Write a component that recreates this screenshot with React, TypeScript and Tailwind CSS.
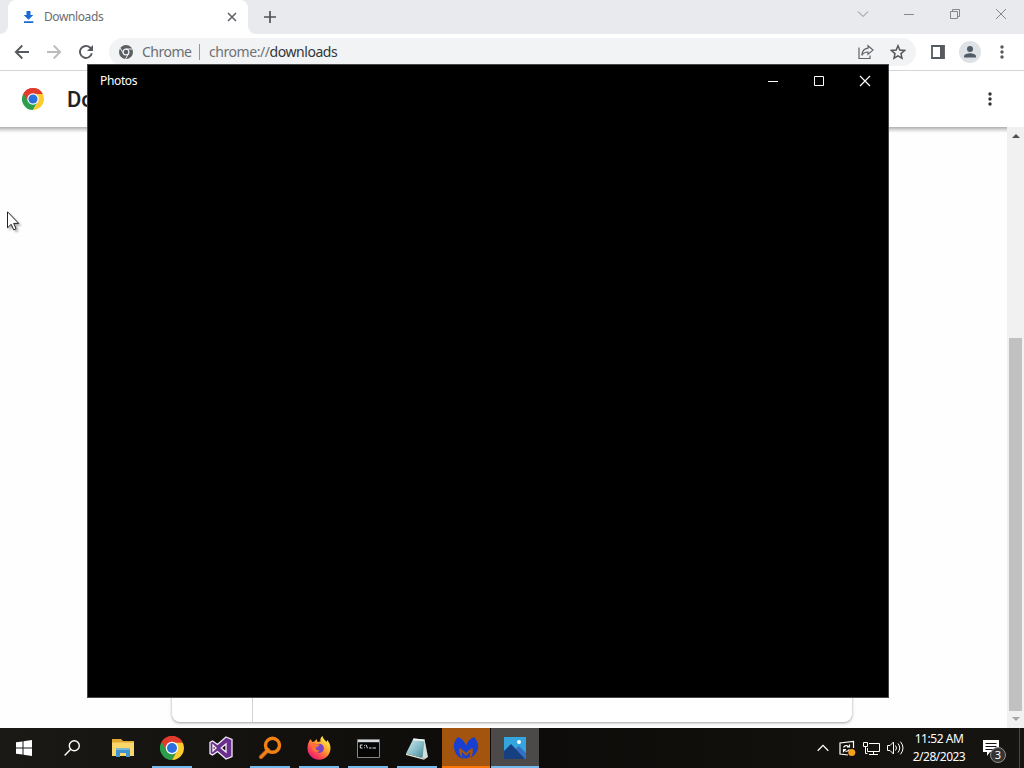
import React from "react";

const ChromeLogo = ({ size }: { size: number }) => (
    <svg width={size} height={size} viewBox="0 0 48 48">
        <path d="M24 24 L3.2 12 A24 24 0 0 1 44.8 12 Z" fill="#e23b2e" />
        <path d="M24 24 L3.2 12 A24 24 0 0 0 24 48 L34 30 Z" fill="#2a9e48" />
        <path d="M24 13 H45.3 A24 24 0 0 1 24 48 L34.4 29 Z" fill="#fccb2f" />
        <path d="M3.2 12 L13.5 30 L24 13 H45.3 L44.8 12 A24 24 0 0 0 3.2 12 Z" fill="#e23b2e" />
        <circle cx="24" cy="24" r="12.5" fill="#fff" />
        <circle cx="24" cy="24" r="10" fill="#2a70df" />
    </svg>
);

const Dots = ({ color }: { color: string }) => (
    <svg width="4" height="14" viewBox="0 0 4 14" fill={color}>
        <circle cx="2" cy="2" r="1.7" />
        <circle cx="2" cy="7" r="1.7" />
        <circle cx="2" cy="12" r="1.7" />
    </svg>
);

const TabStrip = () => (
    <div className="h-[34px] shrink-0 bg-[#e8eaed] flex pl-2">
        <div className="relative w-60 h-full bg-white rounded-t-lg flex items-center pl-[15px] pr-2.5">
            <svg className="absolute -left-2 bottom-0" width="8" height="8">
                <path d="M8 0V8H0A8 8 0 0 0 8 0" fill="#fff" />
            </svg>
            <svg className="absolute -right-2 bottom-0" width="8" height="8">
                <path d="M0 0V8H8A8 8 0 0 1 0 0" fill="#fff" />
            </svg>
            <svg className="mr-2.5" width="11" height="12" viewBox="0 0 11 12" fill="#1b6ad1">
                <path d="M3.5 0h4v4h2.8L5.5 8.8.7 4h2.8zM1 10.3h9.3V12H1z" />
            </svg>
            <span className="flex-1 text-[12px] leading-4 tracking-[-0.4px] text-[#6a6d71]">
                Downloads
            </span>
            <svg
                width="12"
                height="12"
                viewBox="0 0 12 12"
                stroke="#5f6368"
                strokeWidth="1.6"
            >
                <path d="M2 2l8 8M10 2l-8 8" />
            </svg>
        </div>
        <svg
            className="ml-4 mt-[11px]"
            width="12"
            height="12"
            viewBox="0 0 12 12"
            stroke="#4f5256"
            strokeWidth="1.7"
        >
            <path d="M6 0v12M0 6h12" />
        </svg>
        <div className="ml-auto flex h-7 text-[#85878b]">
            <div className="w-[46px] flex items-center justify-center">
                <svg width="12" height="12" fill="none" stroke="currentColor">
                    <path d="M1 3.5l5 5 5-5" />
                </svg>
            </div>
            <div className="w-[46px] flex items-center justify-center">
                <svg width="12" height="12" stroke="currentColor">
                    <path d="M1 6.5h10" />
                </svg>
            </div>
            <div className="w-[46px] flex items-center justify-center">
                <svg width="12" height="12" fill="none" stroke="currentColor">
                    <path d="M1.5 3.5h7v7h-7zM3.5 3.5v-2h7v7h-2" />
                </svg>
            </div>
            <div className="w-[46px] flex items-center justify-center">
                <svg width="12" height="12" stroke="currentColor">
                    <path d="M1 1l10 10M11 1L1 11" />
                </svg>
            </div>
        </div>
    </div>
);

const Toolbar = () => (
    <div className="h-[37px] shrink-0 bg-white border-b border-[#d4d5d6] flex items-center pl-3.5 pr-5">
        <svg width="16" height="16" fill="none" stroke="#55585c" strokeWidth="1.8">
            <path d="M15 8H2M8.3 1.5L1.8 8l6.5 6.5" />
        </svg>
        <svg className="ml-4" width="16" height="16" fill="none" stroke="#babcbe" strokeWidth="1.8">
            <path d="M1 8h13M7.7 1.5L14.2 8l-6.5 6.5" />
        </svg>
        <svg className="ml-4" width="16" height="16" viewBox="0 0 16 16" fill="none">
            <path d="M13.8 9.2A6 6 0 1 1 12.2 3.7L14 5.5" stroke="#55585c" strokeWidth="1.9" />
            <path d="M15 1v6H9z" fill="#55585c" />
        </svg>
        <div className="ml-[15px] w-[807px] h-7 rounded-full bg-[#f1f3f4] flex items-center pl-2.5 pr-2.5 text-[14px] leading-5">
            <svg width="14" height="14" viewBox="0 0 14 14">
                <circle cx="7" cy="7" r="7" fill="#5b5e62" />
                <circle cx="7" cy="7" r="2.9" fill="none" stroke="#f1f3f4" strokeWidth="1.2" />
                <path
                    d="M7 4h6.4M4.4 8.5L1.2 3.1M9.6 8.5L6.6 13.8"
                    stroke="#f1f3f4"
                    strokeWidth="1"
                />
            </svg>
            <span className="ml-[9px] w-[57px] tracking-[-0.5px] text-[#6b6e72]">Chrome</span>
            <span className="w-px h-4 bg-[#94979a]" />
            <span className="ml-[9px] tracking-[-0.44px] text-[#6f7276]">
                chrome://<span className="text-[#33363a]">downloads</span>
            </span>
            <svg
                className="ml-auto"
                width="16"
                height="16"
                viewBox="0 0 16 16"
                fill="none"
                stroke="#5f6368"
                strokeWidth="1.2"
            >
                <path d="M1 3.5v11h11v-3" />
                <path d="M10 1.8l5 4.3-5 4.2V8C7 8 5 9.2 3.8 11.4 4.1 7.2 6.2 4.7 10 4.2z" />
            </svg>
            <svg
                className="ml-4"
                width="16"
                height="16"
                viewBox="0 0 16 16"
                fill="none"
                stroke="#55585c"
                strokeWidth="1.5"
            >
                <path d="M8 1.8l1.8 4.3 4.7.4-3.5 3.1 1 4.6L8 11.8l-4 2.4 1-4.6-3.5-3.1 4.7-.4z" />
            </svg>
        </div>
        <svg className="ml-[15px]" width="14" height="14">
            <path d="M1 1h12v12H1z" fill="none" stroke="#56595d" strokeWidth="1.8" />
            <path d="M9 1h4v12H9z" fill="#56595d" />
        </svg>
        <svg className="ml-3.5" width="22" height="22" viewBox="0 0 22 22">
            <circle cx="11" cy="11" r="11" fill="#dee1e6" />
            <circle cx="11" cy="8" r="3" fill="#505b68" />
            <path d="M5 16.5v-1.2c0-2 3.6-3 6-3s6 1 6 3v1.2z" fill="#505b68" />
        </svg>
        <div className="ml-auto">
            <Dots color="#55585c" />
        </div>
    </div>
);

const DownloadsPage = () => (
    <div className="flex-1 flex flex-col min-h-0 bg-white">
        <div className="h-14 shrink-0 flex items-center pl-[22px] pr-8">
            <ChromeLogo size={22} />
            <h1 className="ml-[23px] font-[Roboto] text-[22px] font-medium text-[#202124]">
                Do
            </h1>
            <div className="ml-auto">
                <Dots color="#303134" />
            </div>
        </div>
        <div className="flex-1 flex min-h-0">
            <div className="flex-1 flex flex-col bg-[#fefefe]">
                <div className="h-1.5 bg-linear-to-b from-[#b0b0b0] via-[#dedede] to-[#fefefe]" />
                <div className="ml-[172px] mb-1.5 flex-1 w-[680px] rounded-lg bg-white shadow-[0_1px_2px_0_rgba(60,64,67,0.3),0_1px_3px_1px_rgba(60,64,67,0.15)]">
                    <div className="ml-20 h-full w-px bg-[#d4d4d4]" />
                </div>
            </div>
            <div className="w-[17px] bg-[#f1f1f1] flex flex-col items-center pt-[7px] pb-[7px]">
                <svg width="8" height="4" fill="#505050">
                    <path d="M0 4l4-4 4 4z" />
                </svg>
                <div className="mt-[200px] mb-1.5 flex-1 w-[13px] bg-[#c1c1c1]" />
                <svg width="8" height="4" fill="#a3a3a3">
                    <path d="M0 0l4 4 4-4z" />
                </svg>
            </div>
        </div>
    </div>
);

const PhotosWindow = () => (
    <div className="absolute left-[87px] top-16 w-[802px] h-[634px] bg-black border border-[#45484b]">
        <div className="h-8 flex items-center pl-3 text-white">
            <span className="flex-1 text-[12px] leading-4 tracking-[-0.35px]">Photos</span>
            <div className="w-[46px] flex justify-center">
                <svg width="12" height="12" stroke="currentColor">
                    <path d="M1 6.5h10" />
                </svg>
            </div>
            <div className="w-[46px] flex justify-center">
                <svg width="12" height="12" fill="none" stroke="currentColor">
                    <path d="M1.5 1.5h9v9h-9z" />
                </svg>
            </div>
            <div className="w-[46px] flex justify-center">
                <svg width="12" height="12" stroke="currentColor" strokeWidth="1.2">
                    <path d="M1 1l10 10M11 1L1 11" />
                </svg>
            </div>
        </div>
    </div>
);

const Explorer = () => (
    <svg width="22" height="18" viewBox="0 0 22 18">
        <path d="M0 0h9l2 2h11v15H0z" fill="#e3aa32" />
        <path d="M0 3.5h22V17H0z" fill="#fbd76b" />
        <path d="M4 9.5h14V18h-4v-4H8v4H4z" fill="#3e94cf" />
        <path d="M4 9.5h14v1.5H4z" fill="#70b8e2" />
    </svg>
);

const VisualStudio = () => (
    <svg width="24" height="24" viewBox="0 0 24 24">
        <path
            d="M17 1l6 2.4v17.2L17 23l-8.5-7.5L3.6 19 1 17.6V6.4L3.6 5l4.9 3.5zM17 8l-4.8 4 4.8 4zM4 9v6l3-3z"
            fill="#68308c"
            fillRule="evenodd"
            stroke="#f4edf7"
            strokeWidth="1.3"
        />
    </svg>
);

const Magnifier = () => (
    <svg width="24" height="24" viewBox="0 0 24 24" fill="none">
        <path d="M10 14L3 21" stroke="#c95c10" strokeWidth="4.2" strokeLinecap="round" />
        <circle cx="14.5" cy="9.3" r="7" stroke="#f28012" strokeWidth="3.4" />
        <path d="M10 14L3 21" stroke="#ef851e" strokeWidth="2.4" strokeLinecap="round" />
    </svg>
);

const Firefox = () => (
    <svg width="24" height="24" viewBox="0 0 24 24">
        <defs>
            <linearGradient id="fox" x1="0.85" y1="0.1" x2="0.2" y2="0.9">
                <stop offset="0" stopColor="#fff04a" />
                <stop offset="0.4" stopColor="#ffa42c" />
                <stop offset="0.75" stopColor="#ff4a4a" />
                <stop offset="1" stopColor="#e82078" />
            </linearGradient>
        </defs>
        <path
            d="M3.5 3l1.8 3 2.5-.8L9.5 3l1 3 3-.5C12.8 3 14 1 15.5 0c.5 3 3 4 4 6l.8-2c2 2.5 3.2 5 3.2 8A11.5 11.5 0 0 1 .5 12.5C.4 9 1.4 6 3.5 3z"
            fill="url(#fox)"
        />
        <circle cx="12.3" cy="12.3" r="4.6" fill="#7544c9" />
        <path d="M4.5 7.5c2-1 4-.5 5.5.7l3 .6-2.4 2.1-2 .6c0 2 2 3.5 4.2 2.6-2 3.8-7 2.5-8-1.6z" fill="#ff7139" />
    </svg>
);

const Terminal = () => (
    <svg width="23" height="19" viewBox="0 0 23 19">
        <path d="M.5.5h22v18H.5z" fill="#050505" stroke="#858585" />
        <path d="M1 1h21v2.2H1z" fill="#d9dde0" />
        <path
            d="M5.5 6H3.3v3h2.2M7.5 6.3v.8M7.5 8.4v.8M9 5.7l1.5 3.6M12 9h2.5M15.5 9h3.5"
            fill="none"
            stroke="#dedede"
            strokeWidth="1"
        />
    </svg>
);

const Notepad = () => (
    <svg width="24" height="24" viewBox="0 0 24 24">
        <defs>
            <linearGradient id="note" x1="0" y1="0" x2="1" y2="1">
                <stop offset="0" stopColor="#d9f0f2" />
                <stop offset="0.55" stopColor="#86bcc7" />
                <stop offset="1" stopColor="#3f8493" />
            </linearGradient>
        </defs>
        <path d="M19.5 3L23 21l-3 2-5-2z" fill="#d6dcd8" />
        <path d="M8.5 2.5l11 1L17.5 22 1 17.5z" fill="url(#note)" />
        <path d="M1 17.5L17.5 22l2.5 1-1 .8L1 19z" fill="#e7e5d2" />
        <path d="M8.5 2.5l11 1-.2 1.8-11.5-1z" fill="#f2f4f2" />
    </svg>
);

const Malwarebytes = () => (
    <svg width="26" height="22" viewBox="0 0 26 22" fill="#193fd0">
        <path d="M5 0c4 1.5 6.5 4.5 8 8.5C14.5 4.5 17 1.5 21 0c3.5 3.5 5.3 9 3.5 13-1.2 3.5-3.5 6-7 7.5 2-2.5 3-5.5 2-9.5-2 1-4.2 2.5-6.5 5-2.3-2.5-4.5-4-6.5-5-1.3 4.5.5 8 4.5 10.8C6 21.2 3 18 1.5 13-.3 8.5 1.5 3.5 5 0z" />
        <path d="M9 15l4 4 4-4v4.5c-2 2.5-6 2.5-8 0z" />
    </svg>
);

const Photos = () => (
    <svg width="22" height="22" viewBox="0 0 22 22">
        <path d="M0 0h22v22H0z" fill="#35a5df" />
        <path d="M10 13l5-4 7 7v6H8z" fill="#3470c3" />
        <path d="M0 14l7-7 14 15H0z" fill="#174080" />
        <circle cx="15" cy="5" r="2" fill="#f5fbf3" />
    </svg>
);

const apps = [
    { name: "explorer", icon: <Explorer />, line: "", bg: "" },
    { name: "chrome", icon: <ChromeLogo size={24} />, line: "w-10 bg-[#76b9ed]", bg: "" },
    { name: "vs", icon: <VisualStudio />, line: "", bg: "" },
    { name: "search", icon: <Magnifier />, line: "w-10 bg-[#76b9ed]", bg: "" },
    { name: "firefox", icon: <Firefox />, line: "w-10 bg-[#76b9ed]", bg: "" },
    { name: "cmd", icon: <Terminal />, line: "w-10 bg-[#76b9ed]", bg: "" },
    { name: "notepad", icon: <Notepad />, line: "w-10 bg-[#76b9ed]", bg: "" },
    { name: "mb", icon: <Malwarebytes />, line: "w-full bg-[#fa7505]", bg: "bg-[#a3540f]" },
    { name: "photos", icon: <Photos />, line: "w-full bg-[#76b9ed]", bg: "bg-[#4c4a49]" },
];

const Tray = () => (
    <div className="ml-auto flex items-center text-white">
        <svg width="12" height="8" fill="none" stroke="currentColor" strokeWidth="1.3">
            <path d="M.7 6.7L6 1.4l5.3 5.3" />
        </svg>
        <svg className="ml-2.5" width="17" height="17" viewBox="0 0 17 17" fill="none">
            <path d="M14.5 8V1.5L1 3v11l8 1" stroke="#fff" strokeWidth="1.2" />
            <path
                d="M4.5 7.5c.7-2.2 4-2.7 5.5-.5M10.5 4.5V7H8M10.3 9.5c-1 2.2-4.2 2.4-5.5.3M4.5 12.3V9.5H7"
                stroke="#fff"
                strokeWidth="1.2"
            />
            <circle cx="12.8" cy="12.5" r="3.5" fill="#f7a11b" />
        </svg>
        <svg className="ml-[7px]" width="17" height="15" fill="none" stroke="currentColor">
            <path d="M6 2.5h10.500v8H4.500V7M10.500 10.500v3M6 13.500h9M.5 1.500h4v4h-4zM2.500 5.500v7h2" />
        </svg>
        <svg className="ml-[7px]" width="17" height="14" fill="none" stroke="currentColor">
            <path d="M.5 4.500H3L6.500 1v12L3 9.500H.5zM8.500 4.500q2 2.500 0 5M11 2.500q3.500 4.500 0 9M13.500.7q5 6.300 0 12.600" />
        </svg>
        <div className="ml-1.5 w-[58px] text-center text-[12px] leading-[18px] whitespace-nowrap">
            <div className="tracking-[-0.45px]">11:52 AM</div>
            <div className="tracking-[-0.5px]">2/28/2023</div>
        </div>
        <div className="relative ml-[15px] mr-[20px] w-4 h-4">
            <svg width="16" height="16">
                <path d="M0 0h16v12h-9l-3 4v-4H0z" fill="#fff" />
                <path d="M2.500 3.500h11M2.500 6.500h11M2.500 9.500h8" stroke="#151411" />
            </svg>
            <span className="absolute left-[7px] top-[7px] w-4 h-4 rounded-full bg-[#353533] border border-[#92918f] text-[11px] leading-[14px] text-center">
                3
            </span>
        </div>
        <div className="mr-1 w-px h-10 bg-[#4a4947]" />
    </div>
);

const Taskbar = () => (
    <div className="h-10 shrink-0 bg-[#171512] bg-linear-to-r from-[#1b1915] via-[#0c0b09] to-[#171512] flex">
        <div className="w-12 flex items-center justify-center">
            <svg width="16" height="16" fill="#fff">
                <path d="M0 2.300l6.500-.9v6.100H0zM7.500 1.200L16 0v7.500H7.500zM0 8.500h6.500v6.100L0 13.700zM7.500 8.500H16V16l-8.500-1.200z" />
            </svg>
        </div>
        <div className="w-[51px] pr-[3px] flex items-center justify-center">
            <svg width="16" height="16" fill="none" stroke="#fff" strokeWidth="1.4">
                <circle cx="10.300" cy="5.700" r="5" />
                <path d="M6.700 9.300L.6 15.400" />
            </svg>
        </div>
        <div className="flex gap-px">
            {apps.map((app) => (
                <div
                    key={app.name}
                    className={`relative w-12 flex items-center justify-center ${app.bg}`}
                >
                    {app.icon}
                    {app.line && (
                        <div
                            className={`absolute bottom-0 left-1/2 h-0.5 -translate-x-1/2 ${app.line}`}
                        />
                    )}
                </div>
            ))}
        </div>
        <Tray />
    </div>
);

const App = () => {
    return (
        <div className="relative w-[1024px] h-[768px] overflow-hidden flex flex-col font-['Noto_Sans','Open_Sans',sans-serif]">
            <TabStrip />
            <Toolbar />
            <DownloadsPage />
            <PhotosWindow />
            <svg className="absolute left-[7px] top-[211px] drop-shadow-[2px_2px_1px_rgba(0,0,0,0.3)]" width="14" height="22">
                <path
                    d="M.5.8v16l3.700-3.500 2.500 5.500 2.400-1-2.400-5.400h5z"
                    fill="#fff"
                    stroke="#222"
                    strokeWidth="1"
                />
            </svg>
            <Taskbar />
        </div>
    );
};

export default App;
